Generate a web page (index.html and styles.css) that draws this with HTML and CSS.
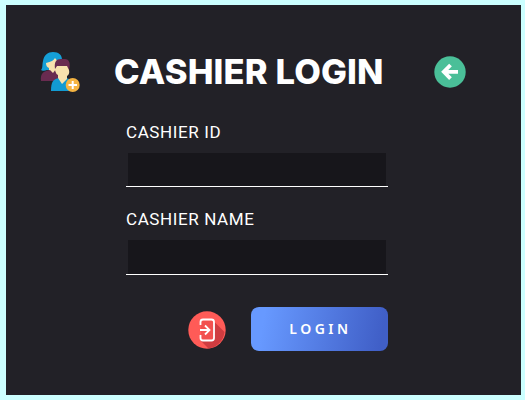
FILE: index.html
```
<!DOCTYPE html>
<html lang="en">
<head>
<meta charset="utf-8">
<title>Cashier Login</title>
<link rel="stylesheet" href="styles.css">
</head>
<body>
<main class="panel">
  <header class="header">
    <svg class="users" viewBox="0 0 42 42">
      <path fill="#159fd7" d="M2 20C4 18 3 15 4 11C5 5 9 2 14 2C20 2 23 5 23 10V20H8C6 21 3 21 2 20Z"/>
      <path fill="#f7e2ae" d="M7 13C12 12 15 10 16 8L20 13L19 21L15 25L10 21V18Q7 17 7 13Z"/>
      <path fill="#692b50" d="M2 31C1 24 4 21 11 20L14 23L17 19L22 24L18 31Z"/>
      <path fill="#129bd3" d="M12 41C12 32 14 29 20 28H27C33 29 35 34 35 41Z"/>
      <path fill="#f7e2ae" d="M16 14H30V20Q31 24 28 26V29L23 34L19 28V25Q15 23 16 14Z"/>
      <path fill="#692b50" d="M16 19C15 12 17 9 22 9H26C30 9 32 13 30 20L28 16H18Z"/>
      <circle cx="33.7" cy="35" r="7" fill="#f5b442"/>
      <path stroke="#fff" stroke-width="2" d="M29.5 35H38M33.7 31V39"/>
    </svg>
    <h1 class="title">CASHIER LOGIN</h1>
    <svg class="back" viewBox="0 0 32 32">
      <circle cx="16" cy="16" r="15.7" fill="#4abf98"/>
      <path fill="none" stroke="#fff" stroke-width="3.8" d="M24 15.8H11M16.5 9L9.8 15.8L16.5 22.6"/>
    </svg>
  </header>
  <form class="form">
    <label class="field"><span class="label">CASHIER ID</span><input class="input" type="text"></label>
    <label class="field"><span class="label">CASHIER NAME</span><input class="input input-name" type="text"></label>
    <div class="actions">
      <svg class="exit" viewBox="0 0 38 38">
        <circle cx="19" cy="19" r="18.7" fill="#ff5b57"/>
        <path fill="#cf3c40" d="M25.5 10L36.5 21A18.7 18.7 0 0 1 20.5 37.6L12.5 29.5Z"/>
        <path fill="#f2514f" d="M13 10H25V29H13Z"/>
        <path fill="none" stroke="#fff" stroke-width="1.8" d="M12.5 14V11Q12.5 8.5 15 8.5H23.5Q26 8.5 26 11V27Q26 29.5 23.5 29.5H15Q12.5 29.5 12.5 27V24M12 19H21M17 14.5L21.5 19L17 23.5"/>
      </svg>
      <button class="login" type="button">LOGIN</button>
    </div>
  </form>
</main>
</body>
</html>
```

FILE: styles.css
```
* { box-sizing: border-box; }
body {
  margin: 0;
  width: 525px;
  height: 400px;
  padding: 5px 4px 5px 6px;
  background: #ccffff;
  font-family: Roboto, sans-serif;
  color: #fff;
}
.panel {
  height: 390px;
  background: #222127;
  overflow: hidden;
}
.header {
  display: flex;
  align-items: center;
  height: 44px;
  margin-top: 44px;
  padding-left: 33px;
}
.users { width: 42px; height: 42px; }
.title {
  width: 319.5px;
  margin: 2px 0 0 33px;
  font-family: Inter, sans-serif;
  font-size: 34.5px;
  line-height: 44px;
  font-weight: 800;
  letter-spacing: 0.15px;
  white-space: nowrap;
}
.back { width: 32px; height: 32px; margin-top: 1px; }
.form {
  width: 262px;
  margin: 29px 0 0 120px;
}
.field { display: block; height: 87px; }
.label {
  display: block;
  height: 30px;
  font-size: 17px;
  line-height: 20px;
  letter-spacing: 0.6px;
}
.input {
  display: block;
  width: 262px;
  height: 34px;
  padding: 0 8px;
  border: solid #222127;
  border-width: 1px 2px 0;
  border-radius: 0;
  outline: 0;
  background: #17161b;
  box-shadow: 0 1px #fff;
  color: #fff;
  font: 16px Roboto, sans-serif;
}
.input-name { height: 35px; }
.actions {
  display: flex;
  align-items: center;
  justify-content: flex-end;
  gap: 25px;
  height: 44px;
  margin-top: 11px;
}
.exit { width: 38px; height: 38px; margin-top: 2px; }
.login {
  width: 137px;
  height: 44px;
  padding: 0 0 2px 2px;
  border: 0;
  border-radius: 8px;
  background: linear-gradient(100deg, #6799ff 10%, #405fc7 94%);
  color: #fff;
  font: 600 14px "Noto Sans", sans-serif;
  letter-spacing: 3.5px;
}
```
